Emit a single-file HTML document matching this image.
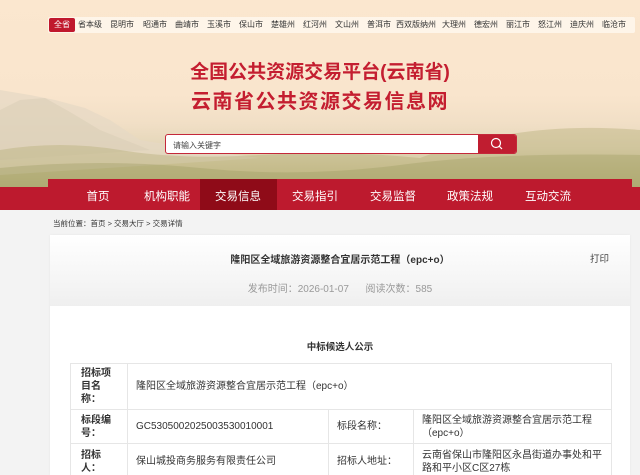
<!DOCTYPE html>
<html><head><meta charset="utf-8"><style>
*{margin:0;padding:0;box-sizing:border-box}
html,body{width:640px;height:475px;overflow:hidden}
body{background:#f3f3f3;font-family:"Liberation Sans","Noto Sans CJK SC",sans-serif;position:relative}
.hdr{position:absolute;left:0;top:0;width:640px;height:190px;background:linear-gradient(180deg,#fbe7cf 0%,#f9e5cd 50%,#f1dfc6 65%,#e3d6b8 78%,#cfc598 90%,#bdb785 100%);overflow:hidden}
.city{position:absolute;left:48px;top:17px;width:587px;height:16px;background:rgba(255,250,242,.75);border-radius:2px}
.city span{position:absolute;top:3px;font-size:8px;color:#333;transform:translateX(-50%);white-space:nowrap;line-height:10px}
.city .on{background:#c0182d;color:#fff;top:1px;padding:2px 5px;border-radius:2px}
.t{position:absolute;left:0;width:640px;text-align:center;color:#c41e30;font-weight:bold;font-size:19px;line-height:22px}
.search{position:absolute;left:165px;top:134px;width:352px;height:20px;border:1px solid #c4283a;border-radius:3px;background:#fff;overflow:hidden}
.search span{position:absolute;left:7px;top:5px;font-size:8px;color:#444}
.search .btn{position:absolute;right:0;top:0;width:38px;height:18px;background:#c01d30}
.nav{position:absolute;left:0;top:187px;width:640px;height:23px;background:#bd1a2e}
.nav2{position:absolute;left:48px;top:179px;width:584px;height:10px;background:#bd1a2e}
.nav a{position:absolute;top:3px;color:#fff;font-size:11.5px;text-decoration:none;text-align:center;line-height:14px;transform:translateX(-50%)}
.act{position:absolute;left:200px;top:-8px;width:77px;height:31px;background:#8f0b18}
.bc{position:absolute;left:53px;top:218px;font-size:7.5px;color:#333}
.card{position:absolute;left:50px;top:235px;width:580px;height:240px;background:#fff;box-shadow:0 0 3px rgba(0,0,0,.05);overflow:hidden}
.ch{position:absolute;left:0;top:0;width:580px;height:71px;background:linear-gradient(180deg,#fff 0%,#f6f6f6 60%,#efefef 100%)}
.cap{position:absolute;left:0;width:580px;text-align:center}
table{position:absolute;left:20px;top:128px;width:542px;border-collapse:collapse;font-size:10px;color:#333}
td{border:1px solid #e6e6e6;padding:0 8px;vertical-align:middle;line-height:13px}
td.k{font-weight:bold;padding:0 10px}
</style></head><body>
<div class="hdr">
<svg width="640" height="190" style="position:absolute;left:0;top:0">
<path d="M0 90 L30 95 L55 100 L85 108 L110 120 L140 140 L200 150 L260 158 L0 175Z" fill="#e6d9c4" opacity=".7"/>
<path d="M0 110 L20 100 L45 98 L70 112 L100 130 L150 150 L0 160Z" fill="#dbcfb8" opacity=".6"/>
<path d="M0 150 Q60 140 120 150 T260 155 T420 158 Q520 120 640 130 L640 190 L0 190Z" fill="#b5ad76" opacity=".4"/>
<path d="M0 168 Q100 158 200 168 T400 165 T640 155 L640 190 L0 190Z" fill="#9c9a5e" opacity=".35"/>
</svg>
<div class="city">
<span class="on" style="left:14px">全省</span>
<span style="left:42px">省本级</span><span style="left:74px">昆明市</span><span style="left:107px">昭通市</span><span style="left:139px">曲靖市</span><span style="left:171px">玉溪市</span><span style="left:203px">保山市</span><span style="left:235px">楚雄州</span><span style="left:267px">红河州</span><span style="left:299px">文山州</span><span style="left:331px">普洱市</span><span style="left:368px">西双版纳州</span><span style="left:406px">大理州</span><span style="left:438px">德宏州</span><span style="left:470px">丽江市</span><span style="left:502px">怒江州</span><span style="left:534px">迪庆州</span><span style="left:566px">临沧市</span>
</div>
<div class="t" style="top:62px">全国公共资源交易平台(云南省)</div>
<div class="t" style="top:91px;font-size:20px;letter-spacing:1.5px">云南省公共资源交易信息网</div>
<div class="search"><span>请输入关键字</span><div class="btn"><svg width="38" height="18"><circle cx="18" cy="8" r="4.5" fill="none" stroke="#fff" stroke-width="1.2"/><path d="M21.3 11.3 L24 14" stroke="#fff" stroke-width="1.2"/></svg></div></div>
</div>
<div class="nav2"></div>
<div class="nav">
<div class="act"></div>
<a style="left:98px">首页</a><a style="left:167px">机构职能</a><a style="left:238px">交易信息</a><a style="left:315px">交易指引</a><a style="left:393px">交易监督</a><a style="left:470px">政策法规</a><a style="left:548px">互动交流</a>
</div>
<div class="bc">当前位置：首页 &gt; 交易大厅 &gt; 交易详情</div>
<div class="card">
<div class="ch"></div>
<div class="cap" style="top:16px;font-size:10px;font-weight:bold;color:#333">隆阳区全域旅游资源整合宜居示范工程（epc+o）</div>
<div style="position:absolute;right:21px;top:16px;font-size:9.5px;color:#444">打印</div>
<div class="cap" style="top:45px;font-size:10px;color:#999">发布时间：2026-01-07&nbsp;&nbsp;&nbsp;&nbsp;&nbsp;&nbsp;阅读次数：585</div>
<div class="cap" style="top:104px;font-size:9.5px;font-weight:bold;color:#333">中标候选人公示</div>
<table>
<tr style="height:46px"><td class="k" style="width:57px">招标项目名称：</td><td colspan="3">隆阳区全域旅游资源整合宜居示范工程（epc+o）</td></tr>
<tr style="height:34px"><td class="k">标段编号：</td><td style="width:201px">GC5305002025003530010001</td><td style="width:85px">标段名称：</td><td>隆阳区全域旅游资源整合宜居示范工程（epc+o）</td></tr>
<tr style="height:36px"><td class="k">招标人：</td><td>保山城投商务服务有限责任公司</td><td>招标人地址：</td><td>云南省保山市隆阳区永昌街道办事处和平路和平小区C区27栋</td></tr>
</table>
</div>
</body></html>
